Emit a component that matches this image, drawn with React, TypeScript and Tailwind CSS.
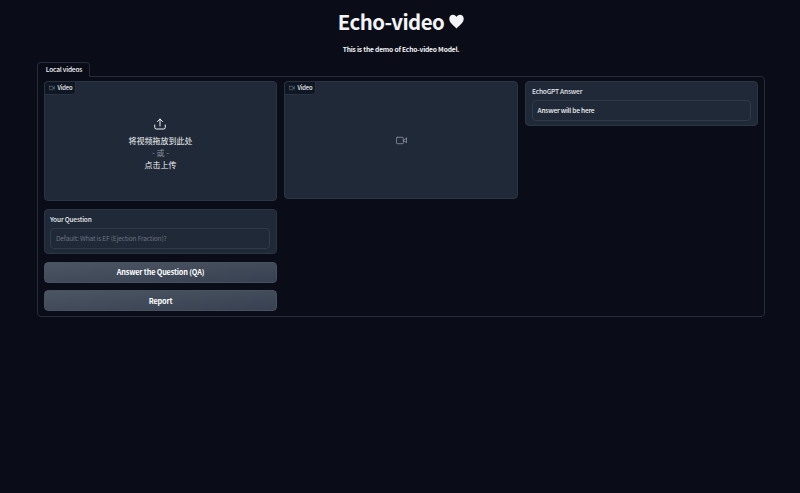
import React from 'react';

const VideoIcon = ({ className }: { className: string }) => (
  <svg viewBox="0 0 24 24" fill="none" stroke="currentColor" strokeWidth="1.6" strokeLinecap="round" strokeLinejoin="round" className={className}>
    <polygon points="23 7 16 12 23 17 23 7" />
    <rect x="1" y="5" width="15" height="14" rx="2" />
  </svg>
);

const UploadIcon = () => (
  <svg viewBox="0 0 24 24" fill="none" stroke="currentColor" strokeWidth="2" strokeLinecap="round" strokeLinejoin="round" className="-ml-px h-[12px] w-[12px]">
    <path d="M1.5 14v5a3 3 0 0 0 3 3h15a3 3 0 0 0 3-3v-5" />
    <polyline points="17 7 12 2 7 7" />
    <line x1="12" y1="2" x2="12" y2="16" />
  </svg>
);

const VideoLabel = () => (
  <div className="absolute -left-px -top-px flex h-[13.5px] w-8 items-center gap-[3px] rounded-tl-[4px] rounded-br-[4px] border border-[#273240] bg-[#0f1624] pl-[3.5px] text-[5.8px] leading-none font-medium tracking-[-0.15px] text-[#f3f4f6]">
    <VideoIcon className="h-[6px] w-[6px] text-[#9ca3af]" />
    <span className="pt-px">Video</span>
  </div>
);

const Button = ({ children }: { children: React.ReactNode }) => (
  <button className="flex h-[21px] w-full shrink-0 items-center justify-center rounded-[4px] border border-[#475260] bg-gradient-to-br from-[#4b5563] to-[#374151] pt-[1.5px] text-[7.3px] leading-none font-bold tracking-[-0.18px] text-white">
    {children}
  </button>
);

export default function App() {
  return (
    <div className="h-[493px] w-[800px] overflow-hidden bg-[#0a0c17] pr-[35px] pl-[37px] font-['Noto_Sans_CJK_SC','Noto_Sans',sans-serif] text-[#f3f4f6]">
      <header className="flex h-[62px] flex-col items-center">
        <h1 className="mt-[8px] flex h-[26px] items-center gap-[5px] text-[20.4px] leading-[26px] font-bold tracking-[-0.55px]">
          <span>Echo-video</span>
          <svg viewBox="0 0 16 15" className="mt-px h-[15px] w-[15px]" fill="currentColor">
            <path d="M8 15C6.5 13 0.3 9.4 0.3 4.6C0.3 2 2.2 0.3 4.3 0.3C6 0.3 7.3 1.3 8 2.7C8.7 1.3 10 0.3 11.7 0.3C13.8 0.3 15.7 2 15.7 4.6C15.7 9.4 9.5 13 8 15Z" />
          </svg>
        </h1>
        <p className="mt-[10px] text-[6.7px] leading-[10px] font-bold tracking-[-0.19px]">This is the demo of Echo-video Model.</p>
      </header>

      <div className="flex h-[15px]">
        <div className="z-10 flex h-[15px] w-[53px] items-center justify-center rounded-t-[4px] border border-b-0 border-[#252c3a] bg-[#0a0c17] pb-px pl-px text-[6.6px] leading-none font-medium tracking-[-0.2px]">Local videos</div>
      </div>
      <main className="-mt-px flex h-[241px] gap-[7px] rounded-b-[4px] rounded-tr-[4px] border border-[#252c3a] px-[6px] pt-[4px]">
        <section className="flex w-[233px] flex-col gap-[7.8px]">
          <div className="relative flex h-[120px] shrink-0 flex-col items-center rounded-[4px] border border-[#2b3644] bg-[#1f2937] pt-[36px]">
            <VideoLabel />
            <UploadIcon />
            <div className="mt-[5px] text-center text-[8px] leading-[11.8px]">
              <div>将视频拖放到此处</div>
              <div className="text-[#8b929e]">- 或 -</div>
              <div>点击上传</div>
            </div>
          </div>
          <div className="h-[45px] shrink-0 rounded-[4px] border border-[#2b3644] bg-[#1f2937] pt-[4px] pr-[6px] pl-[5px]">
            <div className="text-[6.6px] leading-[10px] font-medium tracking-[-0.19px] text-[#e5e7eb]">Your Question</div>
            <div className="mt-[4px] flex h-[21px] items-center rounded-[4px] border border-[#303b49] px-[5px] text-[6.6px] leading-none tracking-[-0.18px] text-[#6b7280]">Default: What is EF (Ejection Fraction)?</div>
          </div>
          <Button>Answer the Question (QA)</Button>
          <Button>Report</Button>
        </section>
        <section className="w-[234px]">
          <div className="relative flex h-[118px] items-center justify-center rounded-[4px] border border-[#2b3644] bg-[#1f2937]">
            <VideoLabel />
            <VideoIcon className="h-[11px] w-[11px] text-[#9ca3af]" />
          </div>
        </section>
        <section className="w-[233px]">
          <div className="h-[45px] rounded-[4px] border border-[#2b3644] bg-[#1f2937] px-[6px] pt-[4px]">
            <div className="text-[6.6px] leading-[10px] font-medium tracking-[-0.2px] text-[#e5e7eb]">EchoGPT Answer</div>
            <div className="mt-[4px] flex h-[21px] items-center rounded-[4px] border border-[#303b49] px-[4.5px] text-[6.6px] leading-none font-medium tracking-[-0.22px]">Answer will be here</div>
          </div>
        </section>
      </main>
    </div>
  );
}
